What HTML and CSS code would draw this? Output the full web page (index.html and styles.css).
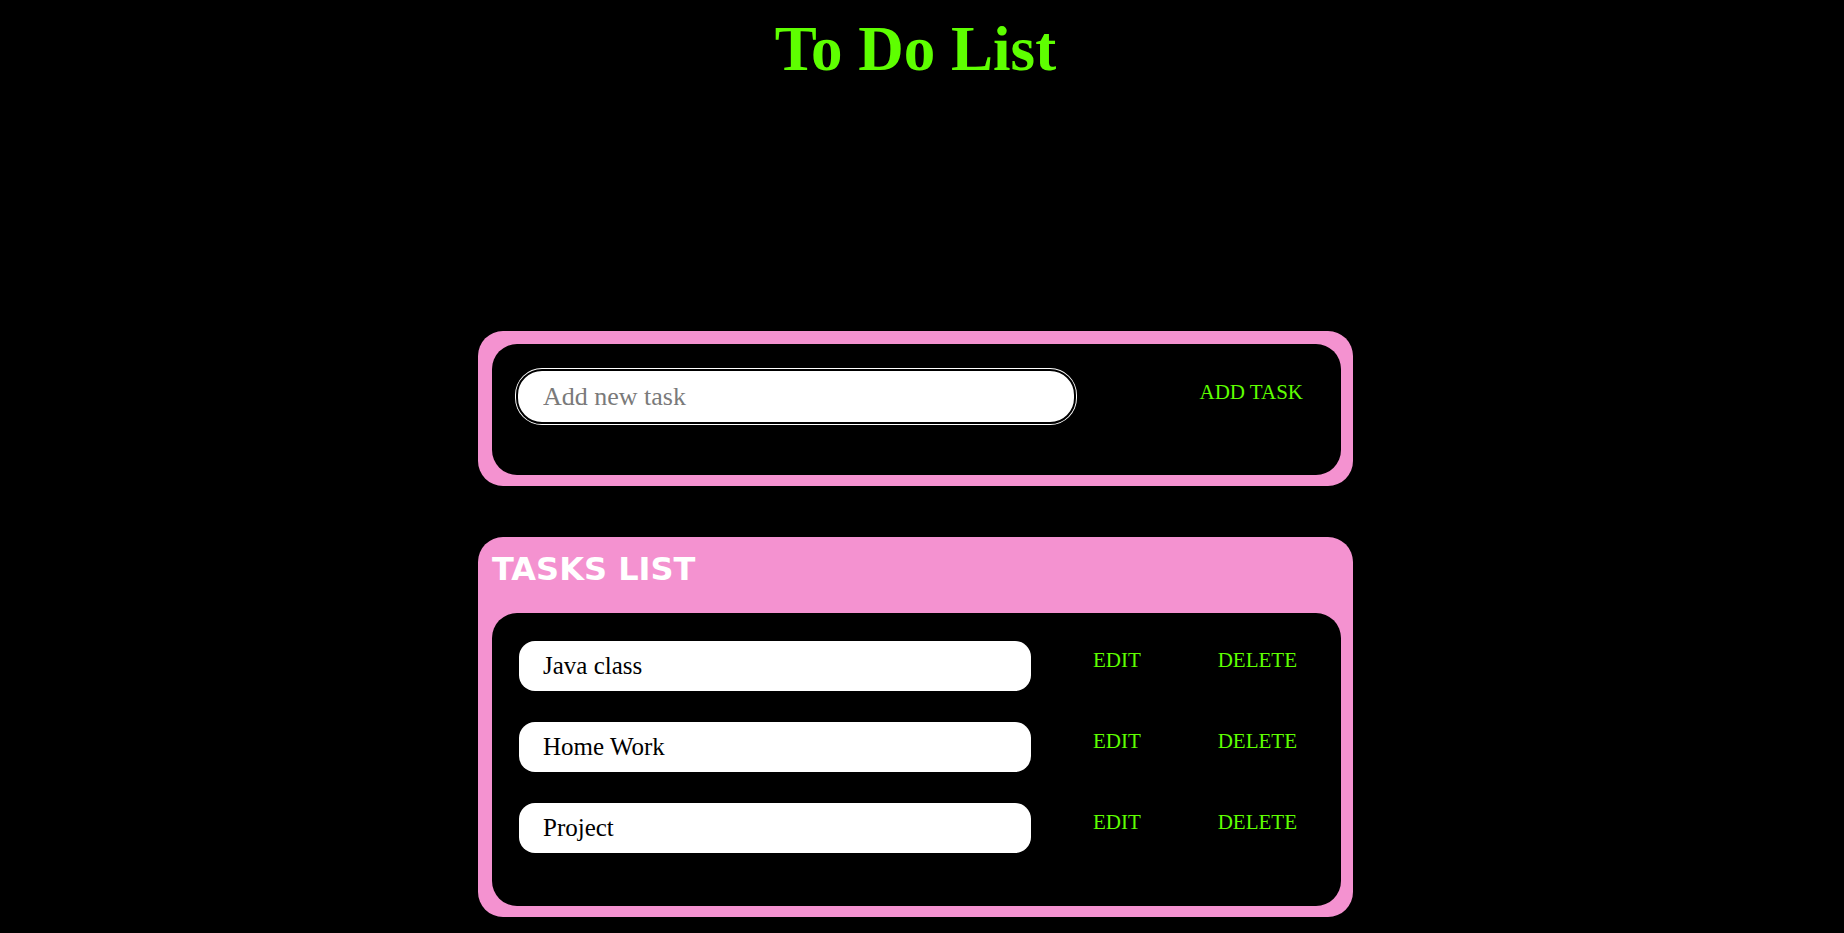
FILE: index.html
```html
<!DOCTYPE html>
<html lang="en">
<head>
<meta charset="utf-8">
<title>To Do List</title>
<link rel="stylesheet" href="styles.css">
</head>
<body>
<main class="page">
  <h1 class="title">To Do List</h1>

  <section class="card card-add">
    <div class="panel add-panel">
      <input class="new-task" type="text" placeholder="Add new task">
      <button class="action add-btn">ADD TASK</button>
    </div>
  </section>

  <section class="card card-list">
    <h2 class="list-title">TASKS LIST</h2>
    <div class="panel list-panel">
      <div class="task-row">
        <div class="task-text">Java class</div>
        <button class="action edit-btn">EDIT</button>
        <button class="action delete-btn">DELETE</button>
      </div>
      <div class="task-row">
        <div class="task-text">Home Work</div>
        <button class="action edit-btn">EDIT</button>
        <button class="action delete-btn">DELETE</button>
      </div>
      <div class="task-row">
        <div class="task-text">Project</div>
        <button class="action edit-btn">EDIT</button>
        <button class="action delete-btn">DELETE</button>
      </div>
    </div>
  </section>
</main>
</body>
</html>
```

FILE: styles.css
```css
* {
  box-sizing: border-box;
}

html, body {
  margin: 0;
  background: #000;
}

body {
  font-family: "Liberation Serif", "Times New Roman", serif;
  padding-right: 13px;
}

.page {
  display: flex;
  flex-direction: column;
  align-items: center;
}

.title {
  margin: 12px 0 0;
  font-size: 63px;
  font-weight: bold;
  line-height: 74px;
  color: #5eff00;
}

.card {
  width: 875px;
  background: #f492d0;
  border-radius: 25px;
  padding: 13px 12px 11px 14px;
}

.card-add {
  margin-top: 245px;
}

.card-list {
  margin-top: 51px;
  padding-top: 0;
}

.panel {
  background: #000;
  border-radius: 25px;
}

.add-panel {
  display: flex;
  align-items: flex-start;
  justify-content: space-between;
  padding: 25px 38px 51px 24px;
}

.new-task {
  width: 560px;
  height: 55px;
  border: 2px solid #000;
  border-radius: 26px;
  box-shadow: 0 0 0 1px #fff;
  background: #fff;
  padding: 0 0 0 25px;
  font-family: "Liberation Serif", "Times New Roman", serif;
  font-size: 26px;
  color: #000;
  outline: none;
}

.new-task::placeholder {
  color: #7a7a7a;
}

.action {
  background: none;
  border: none;
  padding: 0;
  margin: 0;
  cursor: pointer;
  font-family: "Liberation Serif", "Times New Roman", serif;
  font-size: 21px;
  line-height: 24px;
  color: #5eff00;
}

.add-btn {
  margin-top: 11px;
}

.list-title {
  margin: 0;
  padding: 14px 0 0;
  height: 76px;
  font-family: "DejaVu Sans", Verdana, sans-serif;
  font-weight: bold;
  font-size: 32px;
  line-height: 36px;
  color: #fff;
}

.list-panel {
  display: flex;
  flex-direction: column;
  gap: 31px;
  padding: 28px 44px 53px 27px;
}

.task-row {
  display: flex;
  align-items: flex-start;
}

.task-text {
  width: 512px;
  height: 50px;
  background: #fff;
  border-radius: 16px;
  padding: 0 24px;
  display: flex;
  align-items: center;
  font-size: 25px;
  color: #000;
}

.edit-btn {
  margin: 7px 0 0 62px;
}

.delete-btn {
  margin: 7px 0 0 auto;
}
```
